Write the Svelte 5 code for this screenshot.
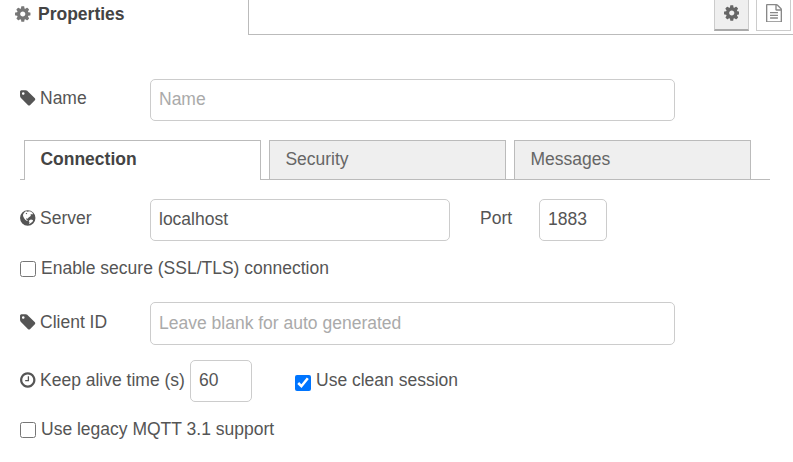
<script>
  const paths = {
    cog: 'M1024 896q0-106-75-181t-181-75-181 75-75 181 75 181 181 75 181-75 75-181zm512-109v222q0 12-8 23t-20 13l-185 28q-19 54-39 91 35 50 107 138 10 12 10 25t-9 23q-27 37-99 108t-94 71q-12 0-26-9l-138-108q-44 23-91 38-16 136-29 186-7 28-36 28H657q-14 0-24.500-8.500T621 1634l-28-184q-49-16-90-37l-141 107q-10 9-25 9-14 0-25-11-126-114-165-168-7-10-7-23 0-12 8-23 15-21 51-66.500t54-70.500q-27-50-41-99L29 1041q-13-2-21-12.500T0 1005V783q0-12 8-23t19-13l186-28q14-46 39-92-40-57-107-138-10-12-10-24 0-10 9-23 26-36 98.500-107.500T337 263q13 0 26 10l138 107q44-23 91-38 16-136 29-186 7-28 36-28h222q14 0 24.500 8.500T915 158l28 184q49 16 90 37l142-107q9-9 24-9 13 0 25 10 129 119 165 170 7 8 7 22 0 12-8 23-15 21-51 66.500t-54 70.500q26 50 41 98l183 28q13 2 21 12.500t8 23.500z',
    tag: 'M448 448q0-53-37.500-90.500t-90.500-37.500-90.500 37.500-37.500 90.500 37.500 90.500 90.500 37.500 90.500-37.500 37.500-90.500zm1067 576q0 53-37 90l-491 492q-39 37-91 37-53 0-90-37l-715-716q-38-37-64.500-101t-26.500-117v-416q0-52 38-90t90-38h416q53 0 117 26.500t102 64.500l715 714q37 39 37 91z',
    clock: 'M896 544v448q0 14-9 23t-23 9h-320q-14 0-23-9t-9-23v-64q0-14 9-23t23-9h224v-352q0-14 9-23t23-9h64q14 0 23 9t9 23zm416 352q0-148-73-273t-198-198-273-73-273 73-198 198-73 273 73 273 198 198 273 73 273-73 198-198 73-273zm224 0q0 209-103 385.500t-279.500 279.500-385.500 103-385.500-103-279.500-279.500-103-385.500 103-385.500 279.500-279.500 385.500-103 385.500 103 279.500 279.500 103 385.500z',
    file: 'M1468 380q28 28 48 76t20 88v1152q0 40-28 68t-68 28h-1344q-40 0-68-28t-28-68v-1600q0-40 28-68t68-28h896q40 0 88 20t76 48zm-444-244v376h376q-10-29-22-41l-313-313q-12-12-41-22zm384 1528v-1024h-416q-40 0-68-28t-28-68v-416h-768v1536h1280zm-1024-864q0-14 9-23t23-9h704q14 0 23 9t9 23v64q0 14-9 23t-23 9h-704q-14 0-23-9t-9-23v-64zm736 224q14 0 23 9t9 23v64q0 14-9 23t-23 9h-704q-14 0-23-9t-9-23v-64q0-14 9-23t23-9h704zm0 256q14 0 23 9t9 23v64q0 14-9 23t-23 9h-704q-14 0-23-9t-9-23v-64q0-14 9-23t23-9h704z',
    globe: 'M768 128a768 768 0 1 0 0 1536a768 768 0 1 0 0-1536zM520 260L700 215L760 290L880 230L1050 260L1230 380L1290 500L1190 540L1100 500L1030 590L1090 680L960 760L850 850L760 960L640 930L590 1010L700 1060L760 1170L700 1190L520 1070L410 930L330 760L290 600L370 420zM560 440L610 520L720 470L660 380zM930 1110L1080 1040L1200 1080L1300 1130L1240 1260L1110 1370L980 1460L900 1500L940 1330L870 1220z'
  };
</script>

{#snippet icon(name)}
  <svg class="icon {name}" viewBox="0 0 1536 1792" aria-hidden="true"><path fill-rule="evenodd" d={paths[name]} /></svg>
{/snippet}

<div class="panel">
  <header>
    <div class="title">{@render icon('cog')}<span>Properties</span></div>
    <div class="tools">
      <button class="selected" aria-label="Properties">{@render icon('cog')}</button>
      <button aria-label="Description">{@render icon('file')}</button>
    </div>
  </header>

  <div class="row name">
    <label for="name">{@render icon('tag')}<span>Name</span></label>
    <input id="name" class="wide" type="text" placeholder="Name" />
  </div>

  <nav>
    <div class="tab active">Connection</div>
    <div class="tab">Security</div>
    <div class="tab">Messages</div>
  </nav>

  <div class="row server">
    <label for="server">{@render icon('globe')}<span>Server</span></label>
    <input id="server" class="host" type="text" value="localhost" />
    <label class="portlabel" for="port">Port</label>
    <input id="port" class="port" type="text" value="1883" />
  </div>

  <label class="check tls"><input type="checkbox" /><span>Enable secure (SSL/TLS) connection</span></label>

  <div class="row client">
    <label for="client">{@render icon('tag')}<span>Client ID</span></label>
    <input id="client" class="wide" type="text" placeholder="Leave blank for auto generated" />
  </div>

  <div class="row keep">
    <label class="keeplabel" for="keep">{@render icon('clock')}<span>Keep alive time (s)</span></label>
    <input id="keep" class="seconds" type="text" value="60" />
    <label class="check clean"><input type="checkbox" checked /><span>Use clean session</span></label>
  </div>

  <label class="check legacy"><input type="checkbox" /><span>Use legacy MQTT 3.1 support</span></label>
</div>

<style>
  :global(body) { background: #fff; }
  .panel {
    width: 793px;
    height: 462px;
    overflow: hidden;
    box-sizing: border-box;
    font: 17.5px/25px "Liberation Sans", Arial, sans-serif;
    color: #555;
  }
  .panel * { box-sizing: border-box; }
  .icon { display: block; flex: none; width: 15.5px; height: 18px; fill: currentColor; }
  header { display: flex; height: 35px; }
  .title {
    display: flex;
    width: 248px;
    padding: 5px 0 0 15px;
    font-weight: bold;
    line-height: 18px;
    color: #444;
  }
  .title .icon { color: #777; margin-right: 7.5px; }
  .tools {
    flex: 1;
    display: flex;
    justify-content: flex-end;
    align-items: flex-start;
    gap: 7px;
    padding-right: 2px;
    border-left: 1px solid #bbb;
    border-bottom: 1px solid #bbb;
  }
  button {
    display: flex;
    justify-content: center;
    width: 35px;
    height: 31px;
    padding: 4px 0 0;
    border: 1px solid #ccc;
    border-top: 0;
    background: #fff;
    color: #888;
  }
  button .file { width: 16px; height: 18.67px; margin: -0.5px 0 0 1px; }
  button.selected { background: #efefef; border-bottom: 2px solid #aaa; color: #666; }
  .row { display: flex; margin-left: 20px; height: 42px; }
  .row > label { display: flex; width: 130px; padding-top: 7px; }
  .row > label .icon { margin: 3px 4.5px 0 0; }
  input[type="text"] {
    height: 42px;
    margin: 0;
    padding: 0 8px 2px;
    border: 1px solid #ccc;
    border-radius: 5px;
    outline: 0;
    background: #fff;
    font: inherit;
    color: #555;
  }
  input::placeholder { color: #aaa; opacity: 1; }
  .wide { width: 525px; }
  .host { width: 300px; }
  .port { width: 68px; }
  .row > .portlabel { width: 59px; margin-left: 30px; }
  .name { margin-top: 44px; }
  nav {
    display: flex;
    gap: 8px;
    width: 750px;
    height: 40px;
    margin: 19px 0 19px 20px;
    padding-left: 4px;
    border-bottom: 1px solid #bbb;
  }
  .tab {
    width: 237px;
    height: 39px;
    padding: 6px 15.4px 0;
    border: 1px solid #bbb;
    border-bottom: 0;
    background: #efefef;
    color: #666;
  }
  .tab.active { height: 40px; background: #fff; font-weight: bold; color: #444; }
  .check { display: flex; height: 25px; }
  .check input { flex: none; width: 16px; height: 16px; margin: 5px 5px 0 0; }
  .tls { margin: 15px 0 0 20px; }
  .client { margin-top: 21px; height: 43px; }
  .client > label { padding-top: 8px; }
  .client input { height: 43px; padding-bottom: 1px; }
  .keep { margin-top: 15px; }
  .keep > label { padding-top: 8px; }
  .row > .keeplabel { width: 170px; }
  .seconds { width: 62px; }
  .row > .clean { width: auto; margin-left: 43px; }
  .clean input { margin-top: 7px; }
  .legacy { margin: 15px 0 0 20px; }
</style>
